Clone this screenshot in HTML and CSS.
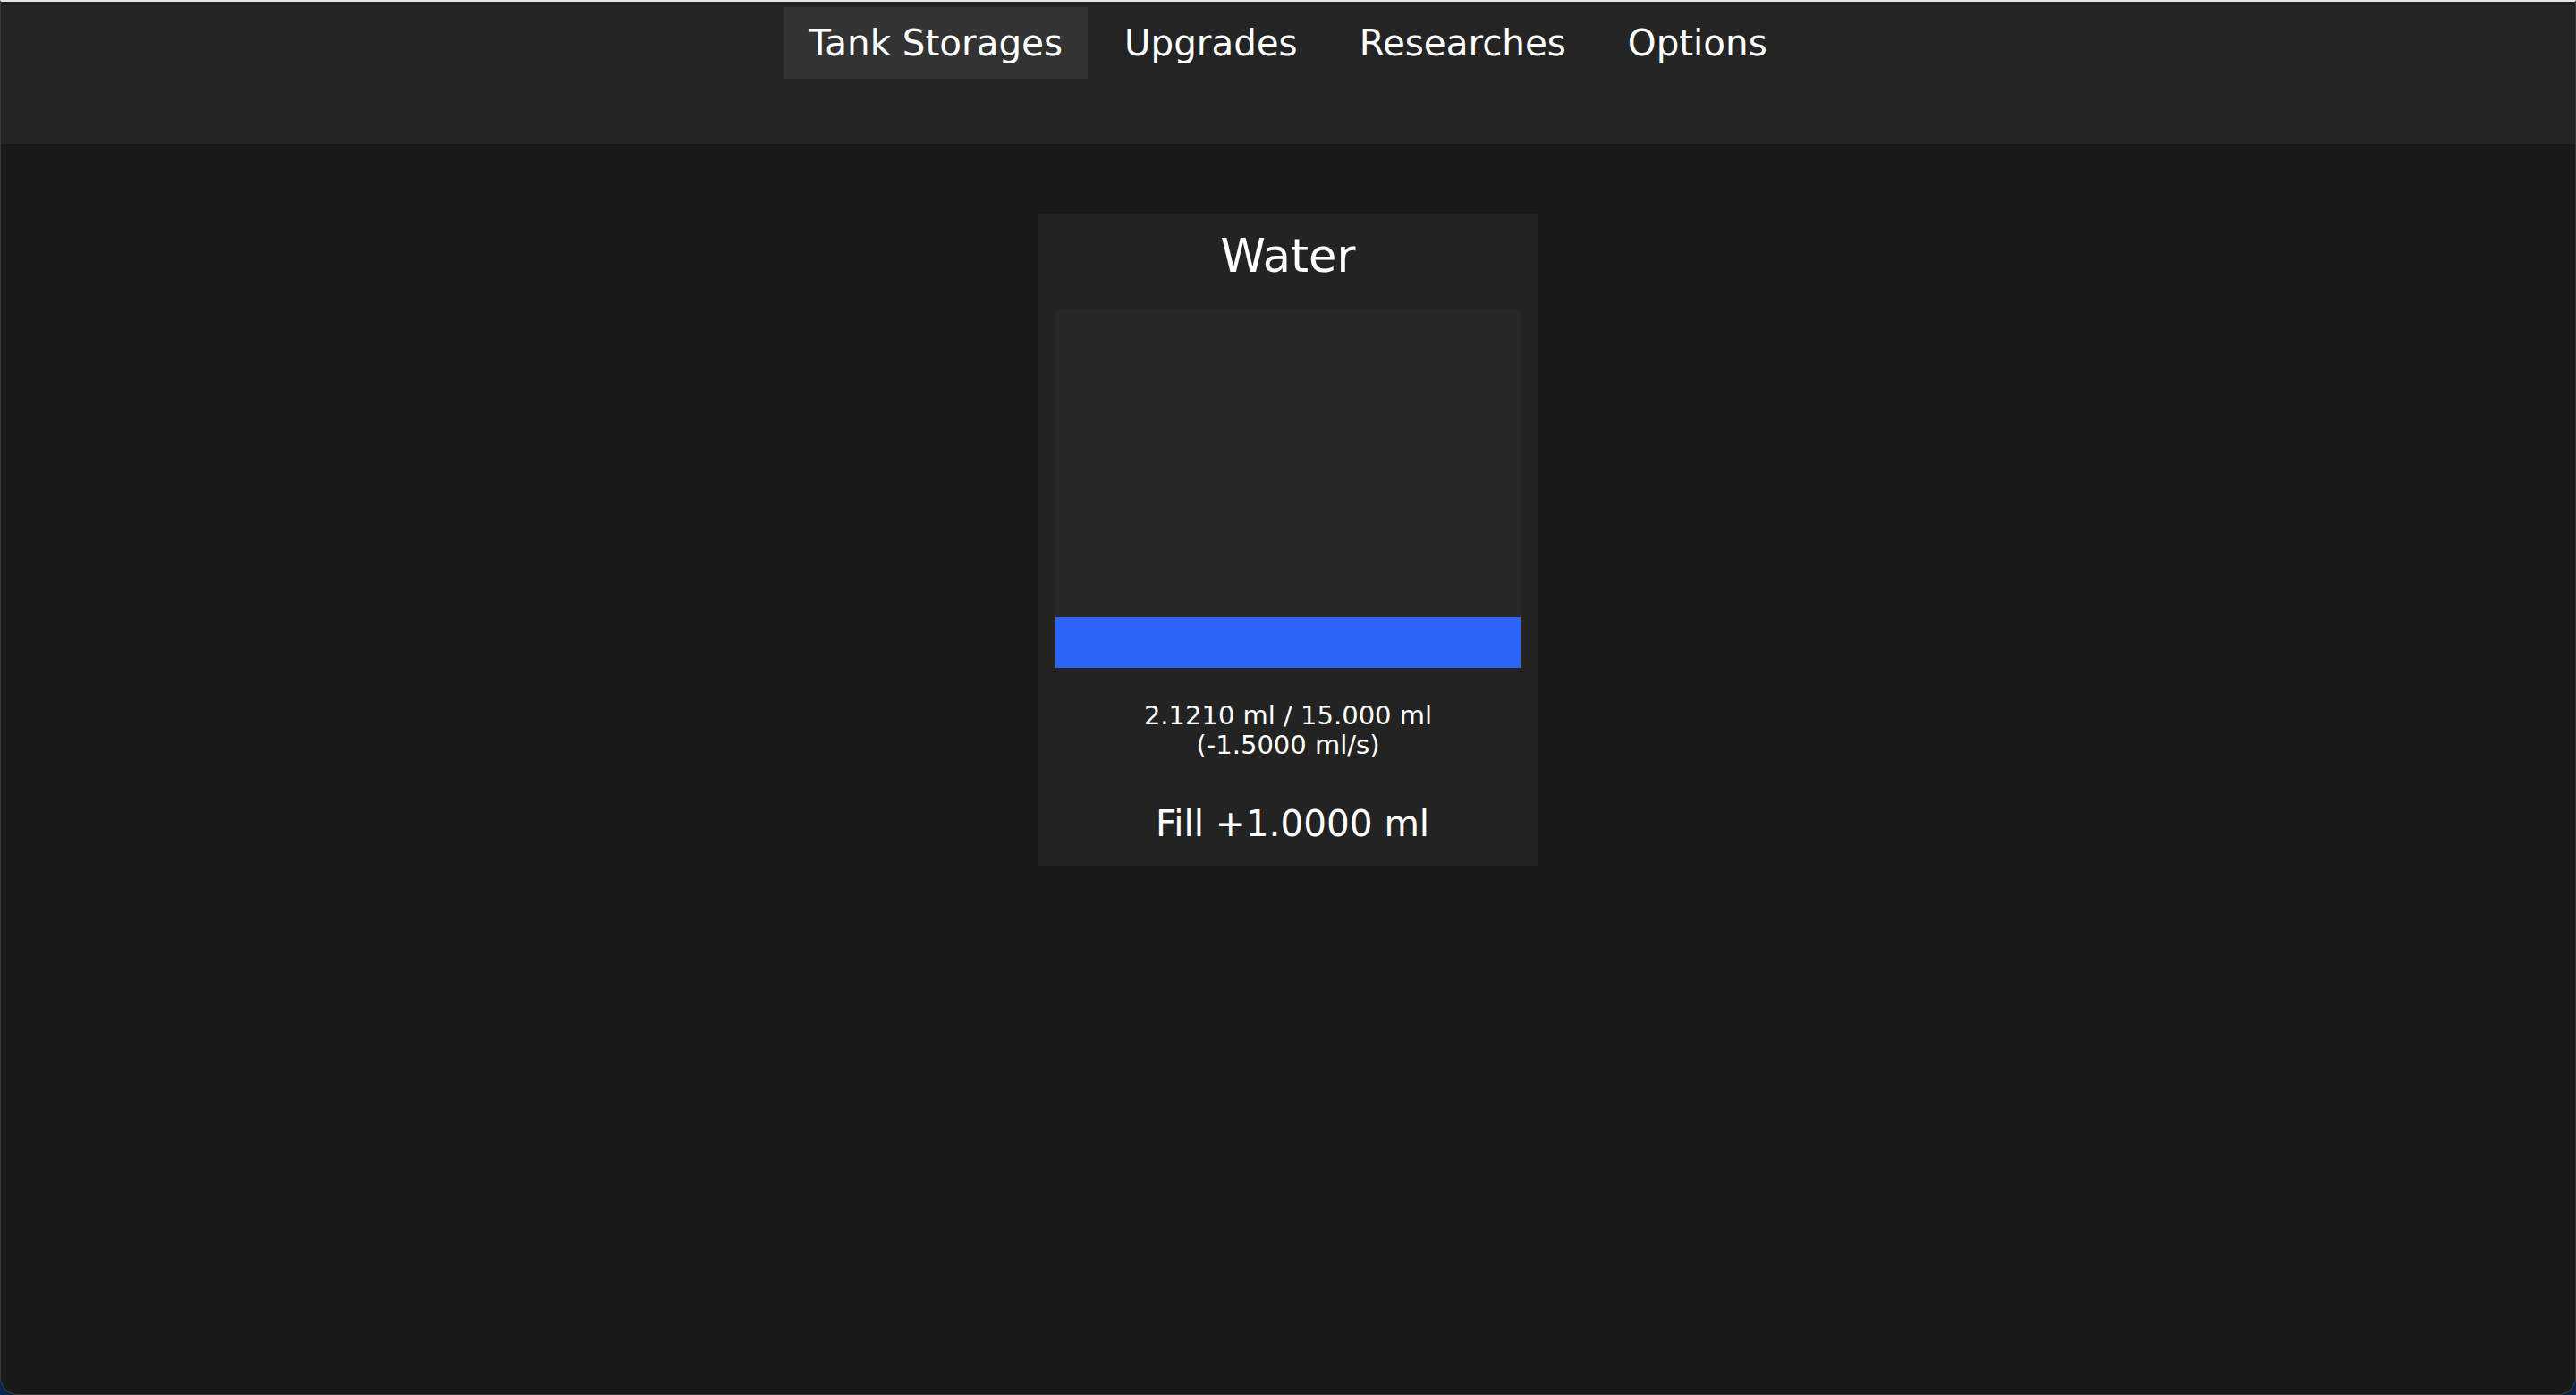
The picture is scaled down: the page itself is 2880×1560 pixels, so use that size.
FILE: index.html
```html
<!DOCTYPE html>
<html lang="en">
<head>
<meta charset="utf-8">
<title>Tank Storages</title>
<link rel="stylesheet" href="styles.css">
</head>
<body>
<div class="window">
  <nav class="topbar">
    <ul class="tabs">
      <li class="tab active">Tank Storages</li>
      <li class="tab">Upgrades</li>
      <li class="tab">Researches</li>
      <li class="tab">Options</li>
    </ul>
  </nav>
  <main class="content">
    <section class="card">
      <h2 class="card-title">Water</h2>
      <div class="tank">
        <div class="tank-fill" style="height: 14.14%"></div>
      </div>
      <p class="amount">2.1210 ml / 15.000 ml<br>(-1.5000 ml/s)</p>
      <button class="fill-btn">Fill +1.0000 ml</button>
    </section>
  </main>
</div>
</body>
</html>
```
FILE: styles.css
```css
* { box-sizing: border-box; }

html, body {
  margin: 0;
  padding: 0;
  height: 100%;
}

body {
  background: #0c2747;
  font-family: "DejaVu Sans", Verdana, sans-serif;
  color: #ffffff;
}

.window {
  height: 1560px;
  background: #191919;
  border-top: 2px solid #e4e4e4;
  border-left: 1px solid #3a3a3a;
  border-right: 1px solid #3a3a3a;
  border-bottom: 1px solid #3a3a3a;
  border-radius: 0 0 20px 20px;
  overflow: hidden;
  display: flex;
  flex-direction: column;
}

.topbar {
  height: 159px;
  background: #242424;
  padding-top: 6px;
}

.tabs {
  list-style: none;
  margin: 0;
  padding: 0;
  display: flex;
  justify-content: center;
  gap: 13px;
}

.tab {
  height: 80px;
  padding: 0 28px;
  display: flex;
  align-items: center;
  font-size: 40.4px;
  color: #ffffff;
}

.tab.active {
  background: #333333;
}

.content {
  flex: 1;
  display: flex;
  flex-direction: column;
  align-items: center;
  padding-top: 78px;
}

.card {
  width: 560px;
  background: #232323;
  padding: 18px 20px 24px;
  display: flex;
  flex-direction: column;
  align-items: stretch;
}

.card-title {
  margin: 0;
  font-size: 51px;
  font-weight: normal;
  line-height: 60px;
  text-align: center;
}

.tank {
  margin-top: 30px;
  height: 400px;
  background: #272727;
  display: flex;
  flex-direction: column;
  justify-content: flex-end;
}

.tank-fill {
  width: 100%;
  background: #2c65f5;
}

.amount {
  margin: 37px 0 0;
  font-size: 29px;
  line-height: 33px;
  text-align: center;
}

.fill-btn {
  margin-top: 48px;
  background: transparent;
  border: none;
  padding: 0 0 0 10px;
  color: #ffffff;
  font-family: "DejaVu Sans", Verdana, sans-serif;
  font-size: 40.5px;
  line-height: 46px;
  text-align: center;
}
```
